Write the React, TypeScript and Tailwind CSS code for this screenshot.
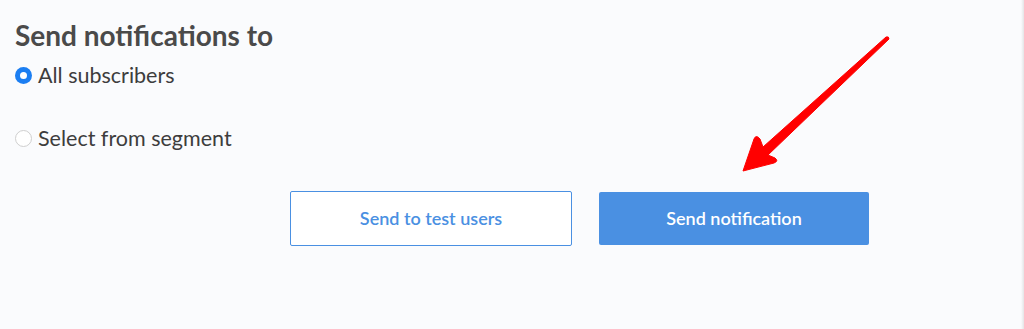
import React from "react";

function Radio({ checked }: { checked: boolean }) {
  return checked ? (
    <span className="inline-flex h-[17px] w-[17px] items-center justify-center rounded-full bg-[#1b7ef2]">
      <span className="h-[7px] w-[7px] rounded-full bg-white" />
    </span>
  ) : (
    <span className="inline-block h-[17px] w-[17px] rounded-full border border-[#cfcfcf] bg-white" />
  );
}

export default function App() {
  return (
    <div
      className="relative h-[329px] w-[1024px] overflow-hidden bg-[#fafbfd] text-[#3d3d3d]"
      style={{ fontFamily: "Lato, 'Open Sans', sans-serif" }}
    >
      <div className="flex flex-col pl-[15px] pt-[19px]">
        <h2 className="text-[28px] font-bold leading-[32px] text-[#4a4a4a]">
          Send notifications to
        </h2>
        <label className="mt-[12px] flex items-center gap-[6px] text-[21.5px] leading-[24px]">
          <Radio checked />
          <span>All subscribers</span>
        </label>
        <label className="mt-[39px] flex items-center gap-[6px] text-[21.5px] leading-[24px]">
          <Radio checked={false} />
          <span>Select from segment</span>
        </label>
        <div className="mt-[41px] flex gap-[27px] pl-[275px]">
          <button className="flex h-[55px] w-[282px] items-center justify-center rounded-[2px] border border-[#4a90e2] bg-white text-[18px] font-semibold text-[#4a90e2]">
            Send to test users
          </button>
          <button className="mt-[1px] flex h-[53px] w-[270px] items-center justify-center rounded-[2px] bg-[#4a90e2] text-[18px] font-semibold text-white">
            Send notification
          </button>
        </div>
      </div>
      <div className="absolute right-0 top-0 h-full w-[3px] bg-gradient-to-r from-[#fafbfd] to-[#e4e4e6]" />
      <svg
        className="absolute left-0 top-0"
        width="1024"
        height="329"
        viewBox="0 0 1024 329"
      >
        <path
          d="M743,171 L754,139 Q756,134 760,139 L763,147 L886,37 Q889,36 889,39 L768,155 L775,158 Q779,161 774,163 Z"
          fill="#ff0000"
          stroke="#ff0000"
          strokeWidth="1"
          strokeLinejoin="round"
        />
      </svg>
    </div>
  );
}
